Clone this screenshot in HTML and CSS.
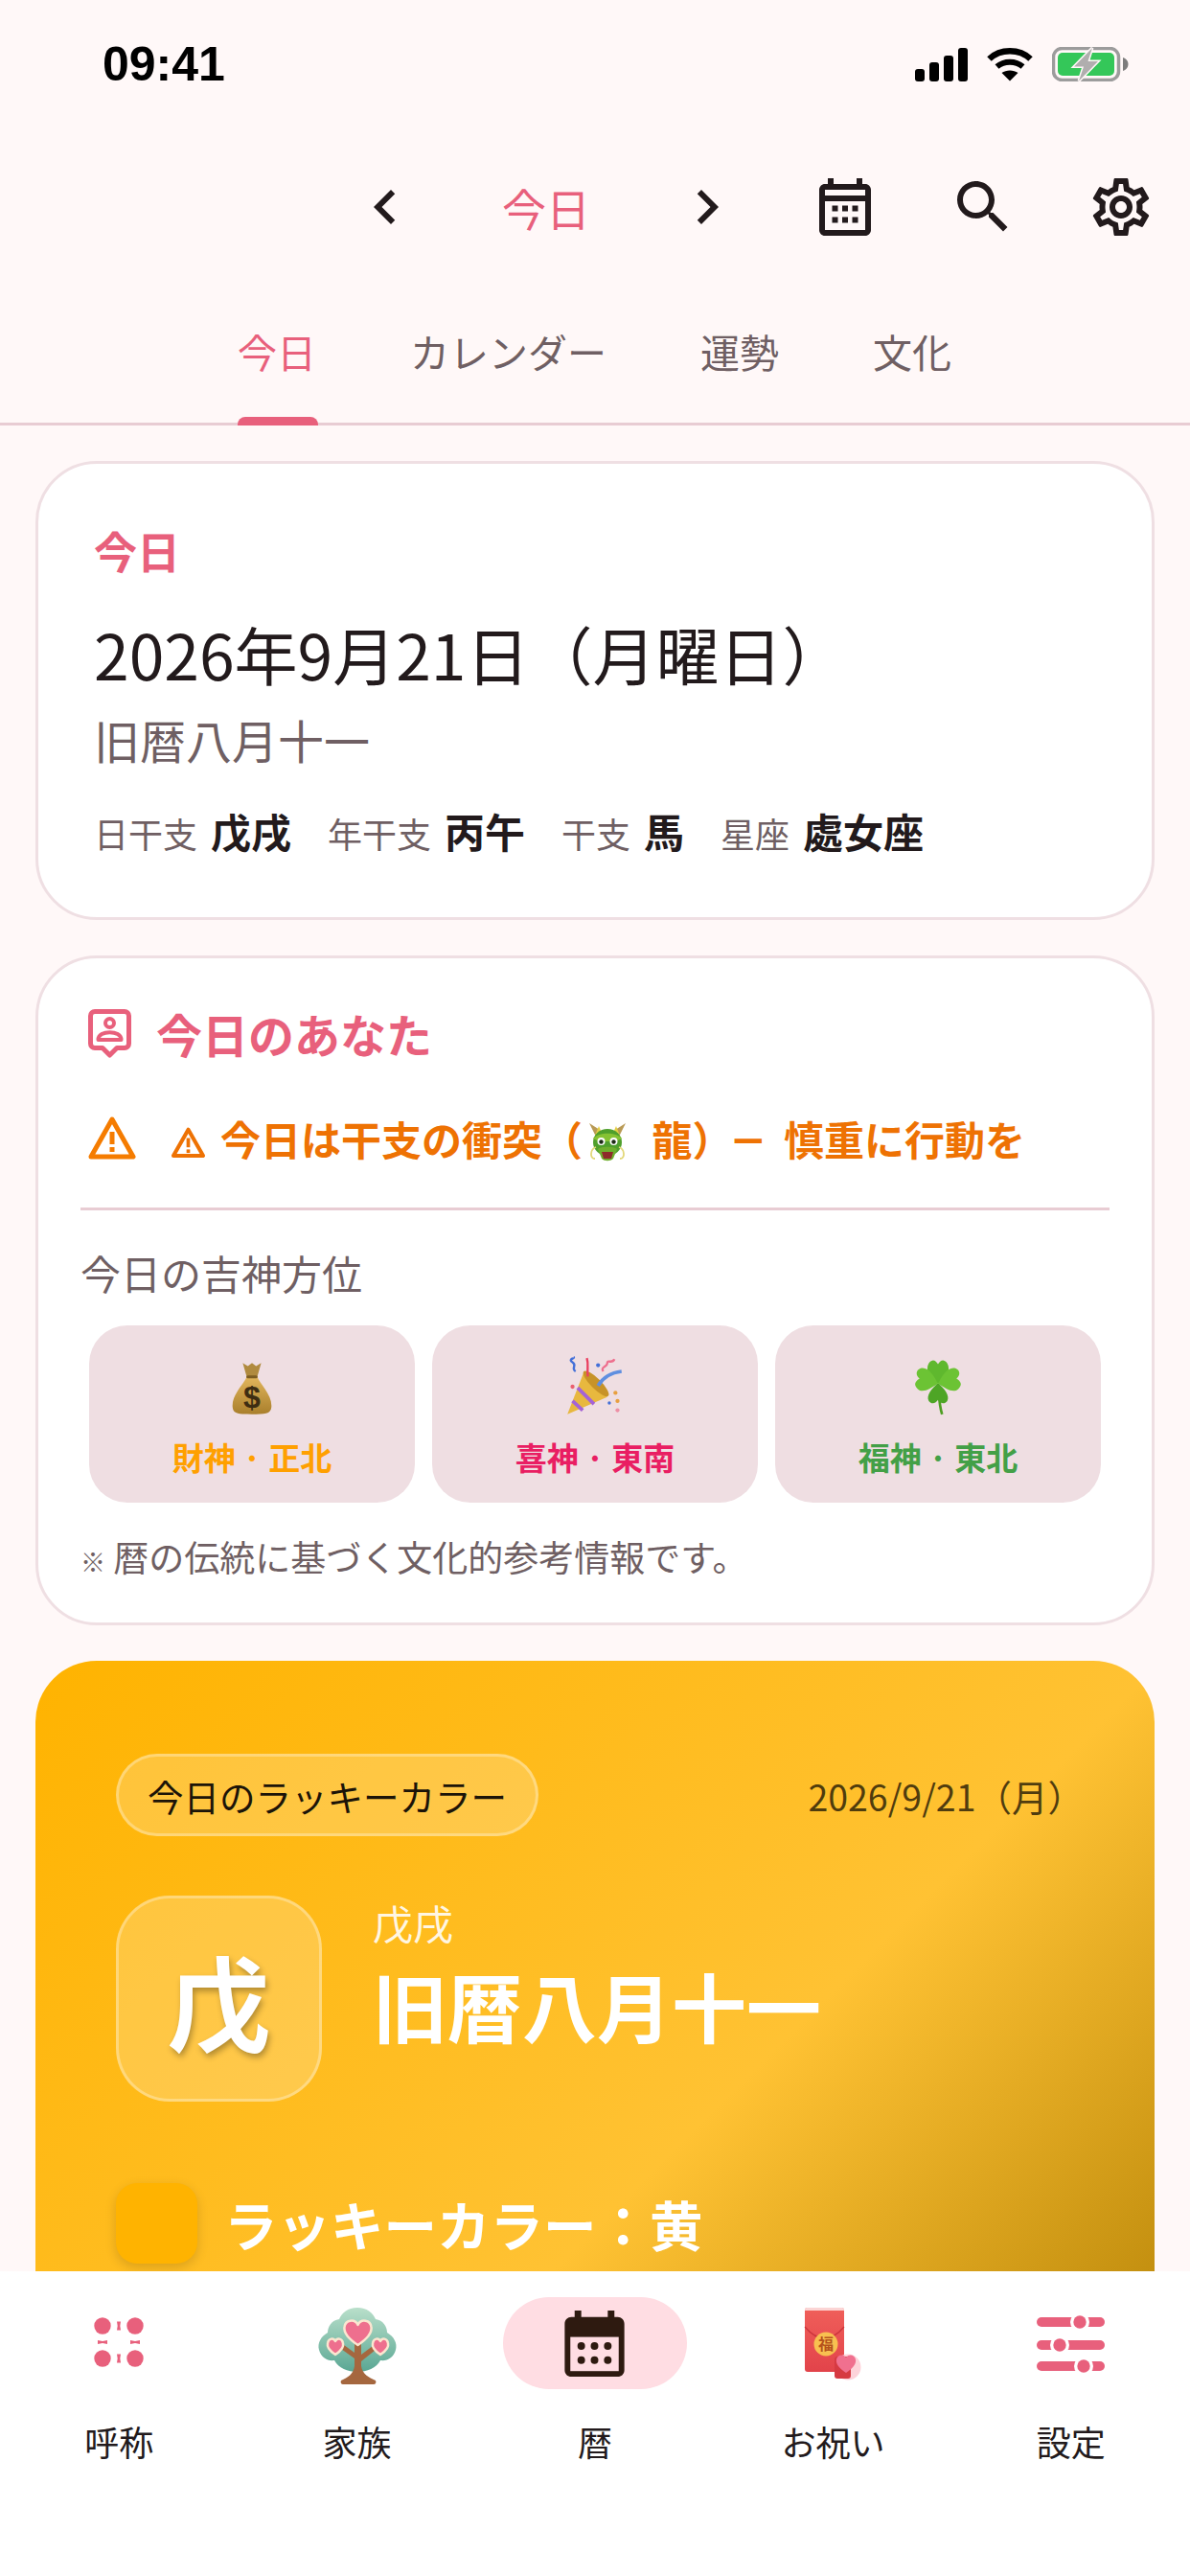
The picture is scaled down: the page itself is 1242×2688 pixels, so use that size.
FILE: index.html
```html
<!DOCTYPE html>
<html lang="ja">
<head>
    <meta charset="UTF-8">
    <meta name="viewport" content="width=device-width, initial-scale=1.0">
    <title>今日</title>
    <link rel="stylesheet" href="styles.css">
</head>
<body>
    <div class="app">
        <!-- status bar -->
        <div class="status-bar">
            <span class="time">09:41</span>
            <div class="status-icons">
                <svg class="ic-signal" viewBox="0 0 55 36">
                    <rect x="0" y="23" width="10" height="13" rx="3"/>
                    <rect x="15" y="16" width="10" height="20" rx="3"/>
                    <rect x="30" y="9" width="10" height="27" rx="3"/>
                    <rect x="45" y="1" width="10" height="35" rx="3"/>
                </svg>
                <svg class="ic-wifi" viewBox="0 0 48 36">
                    <path d="M2.5 12.5C14 1.5 34 1.500 45.500 12.500" fill="none" stroke="#000" stroke-width="6.500"/>
                    <path d="M10.500 20.500C18 14 30 14 37.500 20.500" fill="none" stroke="#000" stroke-width="6"/>
                    <path d="M24 35.500L15.500 27C20 23.500 28 23.500 32.500 27Z"/>
                </svg>
                <svg class="ic-battery" viewBox="0 0 80 36">
                    <rect x="1.500" y="1.500" width="68" height="33" rx="9" fill="none" stroke="#9c9c9c" stroke-width="3.500"/>
                    <rect x="6" y="6" width="59" height="24" rx="5" fill="#34c759"/>
                    <path d="M74 11c3 1 5.500 3.500 5.500 7s-2.500 6-5.500 7z" fill="#7d7d7d"/>
                    <path d="M42 1L23 20.500H33L28 35.500L48 15H37.500Z" fill="#b0aeae" stroke="#fff8f8" stroke-width="3" paint-order="stroke"/>
                </svg>
            </div>
        </div>

        <!-- top bar -->
        <div class="top-bar">
            <svg class="ic-bar" viewBox="0 0 24 24"><path d="M15.410 7.410 14 6l-6 6 6 6 1.410-1.410L10.830 12z"/></svg>
            <span class="top-title">今日</span>
            <svg class="ic-bar" viewBox="0 0 24 24"><path d="M8.590 16.590 10 18l6-6-6-6-1.410 1.410L13.170 12z"/></svg>
            <div class="top-actions">
                <svg class="ic-bar" viewBox="0 0 24 24">
                    <path d="M19 4h-1V2h-2v2H8V2H6v2H5c-1.100 0-2 .9-2 2v14c0 1.100.9 2 2 2h14c1.100 0 2-.9 2-2V6c0-1.100-.9-2-2-2zm0 16H5V10h14v10zm0-12H5V6h14v2z"/>
                    <path d="M7.500 11.500h2v2h-2zM11 11.500h2v2h-2zM14.500 11.500h2v2h-2zM7.500 15.500h2v2h-2zM11 15.500h2v2h-2zM14.500 15.500h2v2h-2z"/>
                </svg>
                <svg class="ic-bar" viewBox="0 0 24 24"><path d="M15.500 14h-.79l-.28-.27C15.410 12.590 16 11.110 16 9.500 16 5.910 13.090 3 9.500 3S3 5.910 3 9.500 5.910 16 9.500 16c1.610 0 3.090-.59 4.230-1.570l.27.28v.79l5 4.990L20.490 19l-4.990-5zm-6 0C7.010 14 5 11.990 5 9.500S7.010 5 9.500 5 14 7.010 14 9.500 11.990 14 9.500 14z"/></svg>
                <svg class="ic-bar" viewBox="0 0 24 24"><path d="M19.430 12.980c.04-.32.07-.64.07-.98 0-.34-.03-.66-.07-.98l2.110-1.650c.19-.15.24-.42.12-.64l-2-3.460c-.09-.16-.26-.25-.44-.25-.06 0-.12.01-.17.03l-2.490 1c-.52-.4-1.080-.73-1.690-.98l-.38-2.650C14.460 2.180 14.250 2 14 2h-4c-.25 0-.46.18-.49.42l-.38 2.650c-.61.25-1.170.59-1.690.98l-2.490-1c-.06-.02-.12-.03-.18-.03-.17 0-.34.09-.43.25l-2 3.460c-.13.22-.07.49.12.64l2.110 1.650c-.04.32-.07.65-.07.98 0 .33.03.66.07.98l-2.110 1.650c-.19.15-.24.42-.12.64l2 3.460c.09.16.26.25.44.25.06 0 .12-.01.17-.03l2.490-1c.52.4 1.080.73 1.690.98l.38 2.650c.03.24.24.42.49.42h4c.25 0 .46-.18.49-.42l.38-2.650c.61-.25 1.170-.59 1.690-.98l2.490 1c.06.02.12.03.18.03.17 0 .34-.09.43-.25l2-3.460c.12-.22.07-.49-.12-.64l-2.110-1.650zm-1.980-1.710c.04.31.05.52.05.73 0 .21-.02.43-.05.73l-.14 1.130.89.7 1.080.84-.7 1.210-1.270-.51-1.040-.42-.9.68c-.43.32-.84.56-1.250.73l-1.060.43-.16 1.130-.2 1.350h-1.400l-.19-1.350-.16-1.130-1.060-.43c-.43-.18-.83-.41-1.230-.71l-.91-.7-1.060.43-1.270.51-.7-1.210 1.080-.84.89-.7-.14-1.130c-.03-.31-.05-.54-.05-.74s.02-.43.05-.73l.14-1.130-.89-.7-1.080-.84.7-1.210 1.270.51 1.040.42.9-.68c.43-.32.84-.56 1.250-.73l1.060-.43.16-1.130.2-1.350h1.390l.19 1.350.16 1.130 1.060.43c.43.18.83.41 1.230.71l.91.7 1.060-.43 1.270-.51.7 1.210-1.070.85-.89.7.14 1.130zM12 8c-2.210 0-4 1.790-4 4s1.790 4 4 4 4-1.790 4-4-1.790-4-4-4zm0 6c-1.100 0-2-.9-2-2s.9-2 2-2 2 .9 2 2-.9 2-2 2z"/></svg>
            </div>
        </div>

        <!-- tabs -->
        <div class="tabs">
            <span class="tab tab-active">今日</span>
            <span class="tab">カレンダー</span>
            <span class="tab">運勢</span>
            <span class="tab">文化</span>
        </div>

        <div class="content">
            <!-- today card -->
            <section class="card today-card">
                <div class="today-label">今日</div>
                <div class="today-date">2026年9月21日（月曜日）</div>
                <div class="today-lunar">旧暦八月十一</div>
                <div class="today-meta">
                    <span class="meta-item"><span class="meta-label">日干支</span><b class="meta-value">戊戌</b></span>
                    <span class="meta-item"><span class="meta-label">年干支</span><b class="meta-value">丙午</b></span>
                    <span class="meta-item"><span class="meta-label">干支</span><b class="meta-value">馬</b></span>
                    <span class="meta-item"><span class="meta-label">星座</span><b class="meta-value">處女座</b></span>
                </div>
            </section>

            <!-- you today card -->
            <section class="card you-card">
                <div class="you-title">
                    <svg class="ic-person" viewBox="0 0 45 51" fill="none" stroke="#e8607c" stroke-width="5">
                        <path d="M7 2.500H38A4.500 4.500 0 0 1 42.500 7V36A4.500 4.500 0 0 1 38 40.500H30L22.500 48L15 40.500H7A4.500 4.500 0 0 1 2.500 36V7A4.500 4.500 0 0 1 7 2.500Z" stroke-linejoin="round"/>
                        <circle cx="22.500" cy="14.500" r="4.500" stroke-width="4"/>
                        <path d="M10.500 32C10.500 21.500 34.500 21.500 34.500 32Z" stroke-width="4" stroke-linejoin="round"/>
                    </svg>
                    <span>今日のあなた</span>
                </div>
                <div class="you-warning">
                    <svg class="ic-warn" viewBox="0 0 50 46">
                        <path d="M25 4L47 43H3Z" fill="none" stroke="#f57c00" stroke-width="5" stroke-linejoin="round"/>
                        <rect x="22.500" y="17" width="5" height="13" fill="#f57c00"/>
                        <rect x="22.500" y="33" width="5" height="5" fill="#f57c00"/>
                    </svg>
                    <span class="warn-text">
                        <svg class="ic-warn-small" viewBox="0 0 50 46">
                            <path d="M25 5L46 42H4Z" fill="none" stroke="#ee7203" stroke-width="5.500" stroke-linejoin="round"/>
                            <rect x="22.500" y="17" width="5" height="13" fill="#ee7203"/>
                            <rect x="22.500" y="33" width="5" height="5" fill="#ee7203"/>
                        </svg>今日は干支の衝突（<svg class="ic-dragon" viewBox="0 0 42 42">
                            <path d="M9 15L2 1L13 8ZM33 15L40 1L29 8Z" fill="#b99a55"/>
                            <path d="M12 4L15 11H27L30 4L34 14L21 18L8 14Z" fill="#e3cf45"/>
                            <ellipse cx="21" cy="21" rx="15" ry="14" fill="#4f9f2c"/>
                            <path d="M6 17C12 10 30 10 36 17L30 20H12Z" fill="#86c233"/>
                            <circle cx="14.500" cy="20" r="4" fill="#fff"/>
                            <circle cx="27.500" cy="20" r="4" fill="#fff"/>
                            <circle cx="14.500" cy="20.500" r="2.200" fill="#1c2a14"/>
                            <circle cx="27.500" cy="20.500" r="2.200" fill="#1c2a14"/>
                            <path d="M11 28C14 25 28 25 31 28L27 38C24 41 18 41 15 38Z" fill="#6fae2d"/>
                            <path d="M15 31H27L25 38H17Z" fill="#8e2a2a"/>
                            <path d="M9 26C3 28 2 38 8 38M33 26C39 28 40 38 34 38" fill="none" stroke="#e3d87a" stroke-width="1.800"/>
                        </svg> 龍）<span class="warn-dash">—</span> 慎重に行動を
                    </span>
                </div>
                <div class="you-divider"></div>
                <div class="you-subtitle">今日の吉神方位</div>
                <div class="god-grid">
                    <div class="god-box">
                        <svg class="emoji emoji-bag" viewBox="0 0 60 60">
                            <defs>
                                <linearGradient id="bagGrad" x1="0" y1="0" x2="0" y2="1">
                                    <stop offset="0" stop-color="#e2b65c"/>
                                    <stop offset="1" stop-color="#a97f2c"/>
                                </linearGradient>
                            </defs>
                            <path d="M21 5L26 8L30 5L34 8L39 5L35 19H25Z" fill="#b08a3e"/>
                            <path d="M25 18H35C38 26 50 36 49 48C48.500 55 42 55 30 55S11.500 55 11 48C10 36 22 26 25 18Z" fill="url(#bagGrad)"/>
                            <rect x="24.500" y="17" width="11" height="3" rx="1.500" fill="#7c5c22"/>
                            <text class="bag-dollar" x="30" y="49" text-anchor="middle">$</text>
                        </svg>
                        <span class="god-label god-wealth">財神 · 正北</span>
                    </div>
                    <div class="god-box">
                        <svg class="emoji" viewBox="0 0 60 60">
                            <path d="M3 57L19 16L42 40Z" fill="#e8b83e"/>
                            <path d="M13 31L29 47M8 44L18 53" stroke="#a463d6" stroke-width="3.500" fill="none"/>
                            <ellipse cx="31" cy="27" rx="5" ry="17" transform="rotate(-45 31 27)" fill="#c79328"/>
                            <path d="M33 29C39 19 47 16 56 15" stroke="#5f8fe0" stroke-width="3.500" fill="none"/>
                            <path d="M23 20C22 12 24 8 22 2" stroke="#ea3f60" stroke-width="2.200" fill="none"/>
                            <path d="M11 15C6 12 13 9 8 6S11 2 9 1" stroke="#4470d8" stroke-width="2.200" fill="none"/>
                            <path d="M38 15C35 10 42 11 42 7S47 8 49 3" stroke="#ee6f8e" stroke-width="2.200" fill="none"/>
                            <circle cx="8" cy="30" r="2" fill="#ea5f6f"/><circle cx="33" cy="9" r="2" fill="#4470d8"/>
                            <circle cx="50" cy="36" r="2" fill="#e8a040"/><circle cx="52" cy="44" r="2" fill="#e8a040"/>
                            <circle cx="44" cy="46" r="1.600" fill="#4470d8"/><circle cx="52" cy="53" r="2" fill="#ee8fa5"/>
                        </svg>
                        <span class="god-label god-joy">喜神 · 東南</span>
                    </div>
                    <div class="god-box">
                        <svg class="emoji" viewBox="0 0 60 60">
                            <path d="M30 27C31 38 31 48 34 57" stroke="#4e9e22" stroke-width="2.500" fill="none"/>
                            <path d="M30 27C22 22 17 14 21 7C25 2 28 5 30 8C32 5 35 2 39 7C43 14 38 22 30 27Z" fill="#5fb82e"/>
                            <path d="M30 27C22 32 15 37 10 32C5 27 9 24 12 22C8 19 8 14 13 12C20 10 26 19 30 27Z" fill="#6cc334"/>
                            <path d="M30 27C38 32 45 37 50 32C55 27 51 24 48 22C52 19 52 14 47 12C40 10 34 19 30 27Z" fill="#6cc334"/>
                            <path d="M30 27C24 31 18 39 21 44C24 48 28 46 30 43C32 46 36 48 39 44C42 39 36 31 30 27Z" fill="#4ea526"/>
                        </svg>
                        <span class="god-label god-luck">福神 · 東北</span>
                    </div>
                </div>
                <div class="you-note"><span class="note-mark">※</span> 暦の伝統に基づく文化的参考情報です。</div>
            </section>

            <!-- lucky colour card -->
            <section class="lucky-card">
                <div class="lucky-head">
                    <span class="lucky-pill">今日のラッキーカラー</span>
                    <span class="lucky-date">2026/9/21（月）</span>
                </div>
                <div class="lucky-main">
                    <div class="lucky-char">戊</div>
                    <div class="lucky-info">
                        <div class="lucky-sub">戊戌</div>
                        <div class="lucky-big">旧暦八月十一</div>
                    </div>
                </div>
                <div class="lucky-color-row">
                    <span class="lucky-swatch"></span>
                    <span class="lucky-color-text">ラッキーカラー：黄</span>
                </div>
            </section>
        </div>

        <!-- bottom nav -->
        <nav class="bottom-nav">
            <div class="nav-item">
                <span class="nav-icon">
                    <svg viewBox="0 0 96 96" fill="#e8607c">
                        <circle cx="31" cy="30" r="8.700"/><circle cx="65" cy="30" r="8.700"/>
                        <circle cx="31" cy="64" r="8.700"/><circle cx="65" cy="64" r="8.700"/>
                        <path d="M46 25.500H50L49.300 30L50 34.500H46L46.700 30ZM46 59.500H50L49.300 64L50 68.500H46L46.700 64Z"/>
                        <path d="M26 45L31 46L36 45V49L31 48L26 49ZM60 45L65 46L70 45V49L65 48L60 49Z"/>
                    </svg>
                </span>
                <span class="nav-label">呼称</span>
            </div>
            <div class="nav-item">
                <span class="nav-icon">
                    <svg viewBox="0 0 96 96">
                        <defs>
                            <linearGradient id="treeGrad" x1="0" y1="0" x2="0" y2="1">
                                <stop offset="0" stop-color="#b9dfca"/>
                                <stop offset="1" stop-color="#5aa794"/>
                            </linearGradient>
                        </defs>
                        <path d="M48 11C58 11 64 16 67 23C75 24 79 31 79 37C86 41 90 48 88 55C86 63 79 67 72 66C68 74 58 78 48 78S28 74 24 66C17 67 10 63 8 55C6 48 10 41 17 37C17 31 21 24 29 23C32 16 38 11 48 11Z" fill="url(#treeGrad)"/>
                        <path d="M45 44H52V72C53 80 60 84 67 87C68 89 67 91 65 91H33C31 91 30 89 31 87C38 84 44 80 45 72V64L31 54L34 50L45 58Z" fill="#a5673f"/>
                        <path d="M52 60L64 51L67 55L52 67Z" fill="#a5673f"/>
                        <g fill="#ee6f8e" stroke="#fbe6d0" stroke-width="2.500" stroke-linejoin="round">
                            <path d="M48.500 50C38 43 33.500 37 34.500 31C35.500 24 45 22 48.500 29C52 22 61.500 24 62.500 31C63.500 37 59 43 48.500 50Z"/>
                            <path d="M25 60C19 56 16 52 17 48C18 43 23 42 25 46C27 42 32 43 33 48C34 52 31 56 25 60Z"/>
                            <path d="M72 60C66 56 63 52 64 48C65 43 70 42 72 46C74 42 79 43 80 48C81 52 78 56 72 60Z"/>
                        </g>
                    </svg>
                </span>
                <span class="nav-label">家族</span>
            </div>
            <div class="nav-item">
                <span class="nav-icon nav-icon-active">
                    <svg class="nav-cal" viewBox="0 0 24 24">
                        <path d="M19 4h-1V2h-2v2H8V2H6v2H5c-1.100 0-2 .9-2 2v14c0 1.100.9 2 2 2h14c1.100 0 2-.9 2-2V6c0-1.100-.9-2-2-2z" fill="#2e1a10"/>
                        <rect x="4.700" y="10" width="14.600" height="10.300" fill="#ffdde3"/>
                        <g fill="#2e1a10">
                            <circle cx="8" cy="12.700" r="1.150"/><circle cx="12" cy="12.700" r="1.150"/><circle cx="16" cy="12.700" r="1.150"/>
                            <circle cx="8" cy="17" r="1.150"/><circle cx="12" cy="17" r="1.150"/><circle cx="16" cy="17" r="1.150"/>
                        </g>
                    </svg>
                </span>
                <span class="nav-label">暦</span>
            </div>
            <div class="nav-item">
                <span class="nav-icon">
                    <svg viewBox="0 0 96 96">
                        <defs>
                            <linearGradient id="envGrad" x1="0" y1="0" x2="0" y2="1">
                                <stop offset="0" stop-color="#f05f5a"/>
                                <stop offset="1" stop-color="#e2434a"/>
                            </linearGradient>
                        </defs>
                        <rect x="19" y="11" width="41" height="67" rx="3" fill="url(#envGrad)"/>
                        <path d="M19 14V13A2 2 0 0 1 21 11H58A2 2 0 0 1 60 13V14Z" fill="#fbd5d5"/>
                        <path d="M19 31C25 38 33 43 39.500 43C46 43 54 38 60 31" fill="none" stroke="#c9333a" stroke-width="1.200"/>
                        <circle cx="64" cy="73" r="13.500" fill="#fdd3da"/>
                        <rect x="50" y="62" width="17" height="23" rx="3" fill="#d63a42"/>
                        <circle cx="41" cy="49" r="12.500" fill="#f8c050"/>
                        <text class="env-fuku" x="41" y="55" text-anchor="middle">福</text>
                        <path d="M62 79C55 74 51 70 52 65C53 60 59 59 62 63C65 59 71 60 72 65C73 70 69 74 62 79Z" fill="#f0708f"/>
                    </svg>
                </span>
                <span class="nav-label">お祝い</span>
            </div>
            <div class="nav-item">
                <span class="nav-icon">
                    <svg viewBox="0 0 96 96">
                        <rect x="12" y="21" width="71" height="10" rx="5" fill="#e8607c"/>
                        <rect x="12" y="45" width="71" height="10" rx="5" fill="#e8607c"/>
                        <rect x="12" y="67" width="71" height="10" rx="5" fill="#e8607c"/>
                        <circle cx="57" cy="26" r="10" fill="#fff"/><circle cx="57" cy="26" r="6.700" fill="#e8607c"/>
                        <circle cx="36" cy="50" r="10" fill="#fff"/><circle cx="36" cy="50" r="6.700" fill="#e8607c"/>
                        <circle cx="61" cy="72" r="10" fill="#fff"/><circle cx="61" cy="72" r="6.700" fill="#e8607c"/>
                    </svg>
                </span>
                <span class="nav-label">設定</span>
            </div>
        </nav>
    </div>
</body>
</html>
```

FILE: styles.css
```css
* {
    box-sizing: border-box;
}
body {
    margin: 0;
    padding: 0;
    font-family: 'Noto Sans CJK JP', 'Noto Sans', sans-serif;
    color: #221a1c;
}
.app {
    width: 1242px;
    height: 2688px;
    background-color: #fff8f8;
    display: flex;
    flex-direction: column;
    overflow: hidden;
}

/* status bar */
.status-bar {
    height: 134px;
    flex: none;
    display: flex;
    justify-content: space-between;
    align-items: center;
    padding: 0 64px 0 107px;
}
.time {
    font-family: 'Liberation Sans', sans-serif;
    font-weight: 700;
    font-size: 50px;
    color: #000;
}
.status-icons {
    display: flex;
    align-items: center;
    gap: 20px;
}
.ic-signal {
    width: 55px;
    height: 36px;
}
.ic-wifi {
    width: 48px;
    height: 36px;
}
.ic-battery {
    width: 80px;
    height: 36px;
}

/* top bar */
.top-bar {
    height: 164px;
    flex: none;
    display: flex;
    justify-content: flex-end;
    align-items: center;
}
.ic-bar {
    width: 72px;
    height: 72px;
    fill: #221a1c;
    flex: none;
}
.top-title {
    width: 264px;
    text-align: center;
    font-size: 46px;
    color: #e8607c;
}
.top-actions {
    display: flex;
    gap: 72px;
    margin-left: 72px;
    padding-right: 36px;
}

/* tabs */
.tabs {
    height: 146px;
    flex: none;
    display: flex;
    gap: 98px;
    padding: 38px 0 0 248px;
    border-bottom: 3px solid #e8ccd3;
}
.tab {
    position: relative;
    height: 60px;
    line-height: 60px;
    font-size: 41px;
    color: #6f5f63;
}
.tab-active {
    color: #e8607c;
}
.tab-active::after {
    content: "";
    position: absolute;
    left: 0;
    right: -2px;
    top: 99px;
    height: 9px;
    background-color: #e8607c;
    border-radius: 8px 8px 0 0;
}

/* content */
.content {
    flex: 1;
    min-height: 0;
    overflow: hidden;
    padding: 37px 37px 0;
    display: flex;
    flex-direction: column;
    gap: 37px;
}
.card {
    flex: none;
    background-color: #fff;
    border: 3px solid #efdfe3;
    border-radius: 64px;
}

/* today card */
.today-card {
    height: 479px;
    padding: 63px 58px 0;
}
.today-label {
    font-size: 45px;
    line-height: 56px;
    font-weight: 700;
    color: #e8607c;
}
.today-date {
    margin-top: 30px;
    font-size: 66px;
    line-height: 96px;
    white-space: nowrap;
}
.today-lunar {
    margin-top: 12px;
    font-size: 48px;
    line-height: 60px;
    color: #6f5f63;
}
.today-meta {
    margin-top: 38px;
    display: flex;
    gap: 38px;
    align-items: baseline;
}
.meta-item {
    display: flex;
    gap: 14px;
    align-items: baseline;
}
.meta-label {
    font-size: 36px;
    line-height: 56px;
    color: #6f5f63;
}
.meta-value {
    font-size: 42px;
    line-height: 56px;
    font-weight: 700;
}

/* you card */
.you-card {
    padding: 48px 44px 0;
    height: 699px;
}
.you-title {
    display: flex;
    align-items: center;
    gap: 26px;
    height: 60px;
    padding-left: 8px;
    font-size: 48px;
    font-weight: 700;
    color: #e8607c;
}
.ic-person {
    width: 45px;
    height: 51px;
}
.you-warning {
    margin-top: 49px;
    height: 60px;
    display: flex;
    align-items: center;
    padding-left: 8px;
    gap: 36px;
}
.ic-warn {
    width: 50px;
    height: 46px;
    flex: none;
}
.warn-text {
    font-size: 42px;
    font-weight: 700;
    color: #ee7203;
    white-space: nowrap;
}
.ic-warn-small {
    width: 37px;
    height: 34px;
    margin-right: 15px;
    vertical-align: -3px;
}
.ic-dragon {
    width: 42px;
    height: 42px;
    margin: 0 16px 0 5px;
    vertical-align: -7px;
}
.warn-dash {
    font-family: Roboto, sans-serif;
    margin-right: 12px;
}
.you-divider {
    margin-top: 43px;
    height: 3px;
    background-color: #e8ccd3;
}
.you-subtitle {
    margin-top: 37px;
    font-size: 42px;
    line-height: 56px;
    color: #6f5f63;
}
.god-grid {
    margin-top: 27px;
    padding: 0 9px;
    display: grid;
    grid-template-columns: repeat(3, 1fr);
    gap: 18px;
}
.god-box {
    height: 185px;
    padding-top: 32px;
    background-color: #efdee2;
    border-radius: 40px;
    display: flex;
    flex-direction: column;
    align-items: center;
}
.emoji {
    width: 64px;
    height: 64px;
}
.emoji-bag {
    transform: translateY(2px);
}
.god-label {
    margin-top: 19px;
    font-size: 33px;
    line-height: 44px;
    font-weight: 700;
}
.god-wealth {
    color: #ffa000;
}
.god-joy {
    color: #e91e63;
}
.god-luck {
    color: #43a047;
}
.bag-dollar {
    font-family: 'Liberation Sans', sans-serif;
    font-size: 30px;
    font-weight: 700;
    fill: #3d2d12;
}
.you-note {
    margin-top: 32px;
    font-size: 37px;
    line-height: 48px;
    color: #6f5f63;
}
.note-mark {
    font-size: 26px;
}

/* lucky card */
.lucky-card {
    flex: none;
    height: 700px;
    padding: 97px 84px 0;
    border-radius: 64px;
    background: linear-gradient(135deg, #ffb300 0%, #ffc233 63%, #c49010 96.600%, #b08008 100%);
}
.lucky-head {
    display: flex;
    justify-content: space-between;
    align-items: center;
}
.lucky-pill {
    height: 86px;
    padding: 0 30px;
    display: flex;
    align-items: center;
    font-size: 37.500px;
    background-color: rgba(255, 255, 255, 0.2);
    border: 3px solid rgba(255, 255, 255, 0.3);
    border-radius: 43px;
    color: #1c1408;
}
.lucky-date {
    margin-right: -10px;
    font-size: 37.500px;
    color: rgba(0, 0, 0, 0.7);
}
.lucky-main {
    margin-top: 62px;
    display: flex;
    gap: 53px;
}
.lucky-char {
    width: 215px;
    height: 215px;
    flex: none;
    display: flex;
    justify-content: center;
    align-items: center;
    font-size: 108px;
    font-weight: 700;
    color: #fff;
    text-shadow: 2px 4px 6px rgba(0, 0, 0, 0.3);
    background-color: rgba(255, 255, 255, 0.2);
    border: 3px solid rgba(255, 255, 255, 0.3);
    border-radius: 56px;
}
.lucky-sub {
    font-size: 42px;
    line-height: 56px;
    color: rgba(255, 255, 255, 0.9);
}
.lucky-big {
    margin-top: 8px;
    font-size: 78px;
    line-height: 100px;
    font-weight: 700;
    color: #fff;
}
.lucky-color-row {
    margin-top: 85px;
    display: flex;
    align-items: center;
    gap: 28px;
}
.lucky-swatch {
    width: 85px;
    height: 84px;
    flex: none;
    background-color: #ffb300;
    border-radius: 22px;
    box-shadow: 0 4px 12px rgba(0, 0, 0, 0.15);
}
.lucky-color-text {
    font-size: 55.500px;
    font-weight: 700;
    color: #fff;
}

/* bottom nav */
.bottom-nav {
    height: 318px;
    flex: none;
    background-color: #fff;
    display: grid;
    grid-template-columns: repeat(5, 1fr);
    padding-top: 27px;
}
.nav-item {
    display: flex;
    flex-direction: column;
    align-items: center;
}
.nav-icon {
    width: 192px;
    height: 96px;
    display: flex;
    justify-content: center;
    align-items: center;
    border-radius: 48px;
}
.nav-icon svg {
    width: 96px;
    height: 96px;
}
.nav-icon-active {
    background-color: #ffdde3;
}
.nav-icon .nav-cal {
    width: 83px;
    height: 83px;
}
.env-fuku {
    font-size: 16px;
    font-weight: 700;
    fill: #b5521b;
}
.nav-label {
    margin-top: 30px;
    font-size: 36px;
    line-height: 48px;
    color: #221a1c;
}
```
